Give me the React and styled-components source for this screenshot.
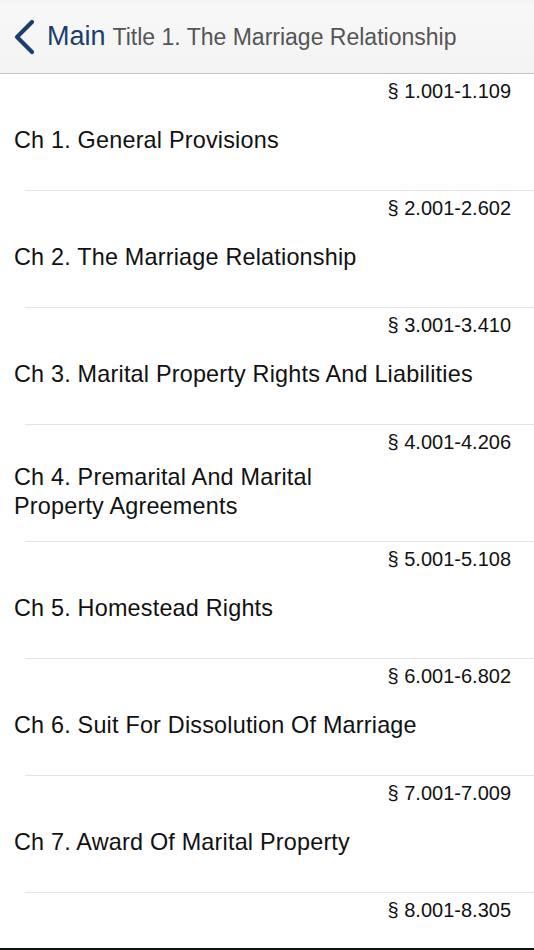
import React from 'react';
import styled, { createGlobalStyle } from 'styled-components';

const CHAPTERS = [
  { range: '§ 1.001-1.109', title: ['Ch 1. General Provisions'] },
  { range: '§ 2.001-2.602', title: ['Ch 2. The Marriage Relationship'] },
  { range: '§ 3.001-3.410', title: ['Ch 3. Marital Property Rights And Liabilities'] },
  { range: '§ 4.001-4.206', title: ['Ch 4. Premarital And Marital', 'Property Agreements'] },
  { range: '§ 5.001-5.108', title: ['Ch 5. Homestead Rights'] },
  { range: '§ 6.001-6.802', title: ['Ch 6. Suit For Dissolution Of Marriage'] },
  { range: '§ 7.001-7.009', title: ['Ch 7. Award Of Marital Property'] },
  { range: '§ 8.001-8.305', title: [] },
];

const GlobalStyle = createGlobalStyle`
  html, body {
    margin: 0;
    padding: 0;
    background: #ffffff;
  }
  body {
    font-family: 'Liberation Sans', Arial, sans-serif;
  }
`;

export default function App() {
  return (
    <>
      <GlobalStyle />
      <Screen>
        <NavBar>
          <BackButton>
            <svg width="24" height="38" viewBox="0 0 24 38" aria-hidden="true">
              <polyline
                points="19,4 4,19 19,34"
                fill="none"
                stroke="#1b3e6d"
                strokeWidth="4.2"
                strokeLinecap="round"
                strokeLinejoin="round"
              />
            </svg>
            <BackLabel>Main</BackLabel>
          </BackButton>
          <NavTitle>Title 1. The Marriage Relationship</NavTitle>
        </NavBar>

        <List>
          {CHAPTERS.map((ch) => (
            <Row key={ch.range}>
              <Range>{ch.range}</Range>
              <TitleArea>
                <ChapterTitle>
                  {ch.title.map((line) => (
                    <TitleLine key={line}>{line}</TitleLine>
                  ))}
                </ChapterTitle>
              </TitleArea>
              <Separator />
            </Row>
          ))}
        </List>

        <BottomEdge />
      </Screen>
    </>
  );
}

const Screen = styled.div`
  display: flex;
  flex-direction: column;
  height: 100vh;
  overflow: hidden;
`;

const NavBar = styled.header`
  flex: none;
  height: 73px;
  display: flex;
  align-items: center;
  padding-left: 13px;
  background: linear-gradient(to bottom, #f3f3f3 0%, #f8f8f8 8%, #f3f3f3 100%);
  border-bottom: 1px solid #c6c6c6;
`;

const BackButton = styled.div`
  display: flex;
  align-items: center;
  gap: 10px;
  margin-right: 7px;
`;

const BackLabel = styled.span`
  font-size: 27px;
  color: #1b3e6d;
  line-height: 1;
`;

const NavTitle = styled.span`
  font-size: 23px;
  color: #555555;
  line-height: 1;
  padding-top: 2px;
`;

const List = styled.div`
  flex: 1;
  overflow: hidden;
`;

const Row = styled.div`
  height: 117px;
  display: flex;
  flex-direction: column;
  box-sizing: border-box;
  padding-top: 5px;
`;

const Range = styled.div`
  font-size: 20px;
  line-height: 24px;
  color: #111111;
  text-align: right;
  padding-right: 23px;
`;

const TitleArea = styled.div`
  flex: 1;
  display: flex;
  align-items: center;
  padding: 0 14px;
  margin-top: 2px;
  margin-bottom: 14px;
`;

const ChapterTitle = styled.div`
  font-size: 23.4px;
  letter-spacing: 0.2px;
  line-height: 29px;
  color: #111111;
`;

const TitleLine = styled.div`
  white-space: nowrap;
`;

const Separator = styled.div`
  height: 1px;
  margin-left: 25px;
  background: #e4e4e4;
`;

const BottomEdge = styled.div`
  flex: none;
  height: 2px;
  background: #111111;
`;
